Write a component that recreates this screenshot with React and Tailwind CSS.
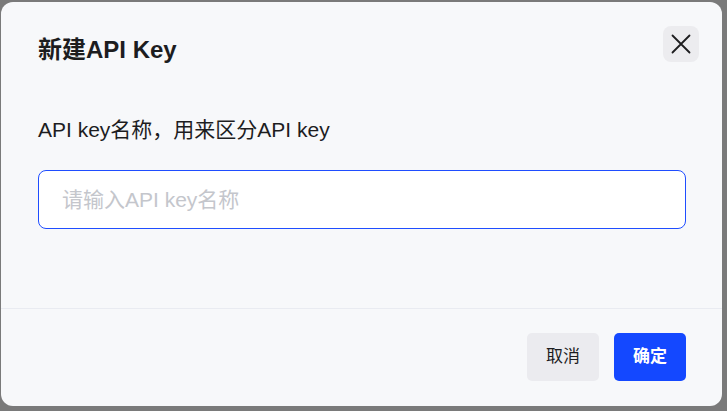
export default function App() {
  return (
    <div className="w-[727px] h-[411px] bg-[#7a7a7a] pl-px pt-[2px] font-['Liberation_Sans','Noto_Sans_CJK_SC',sans-serif]">
      <div className="w-[721px] h-[404px] bg-[#f7f8fa] rounded-[12px] flex flex-col overflow-hidden">
        {/* Header */}
        <div className="flex items-start justify-between pl-[37px] pr-[23px] pt-[24px]">
          <h2 className="text-[24px] leading-[40px] font-bold text-[#1d1d1f] mt-[4px]">新建API Key</h2>
          <button className="w-[36px] h-[36px] rounded-lg bg-[#ececef] flex items-center justify-center text-[#1d1d1f]">
            <svg width="20" height="20" viewBox="0 0 20 20" fill="none" stroke="currentColor" strokeWidth="1.8" strokeLinecap="round">
              <path d="M1.5 1.5l17 17M18.5 1.5l-17 17" />
            </svg>
          </button>
        </div>

        {/* Body */}
        <div className="flex-1 px-[37px] pt-[48px]">
          <label className="block text-[21px] leading-[24px] text-[#1d1d1f] mb-[28px]">
            API key名称，用来区分API key
          </label>
          <input
            className="w-[648px] h-[59px] rounded-[8px] border border-[#1f4dff] bg-white px-[23px] text-[21px] text-[#1d1d1f] placeholder:text-[#c4c6cc] outline-none"
            placeholder="请输入API key名称"
          />
        </div>

        {/* Footer */}
        <div className="h-[98px] border-t border-[#e9ebf1] flex items-start justify-end gap-[15px] pr-[36px] pt-[24px]">
          <button className="w-[72px] h-[48px] rounded-[5px] bg-[#ebebef] text-[17px] text-[#1d1d1f]">取消</button>
          <button className="w-[72px] h-[48px] rounded-[5px] bg-[#1448ff] text-[17px] font-bold text-white">确定</button>
        </div>
      </div>
    </div>
  )
}
